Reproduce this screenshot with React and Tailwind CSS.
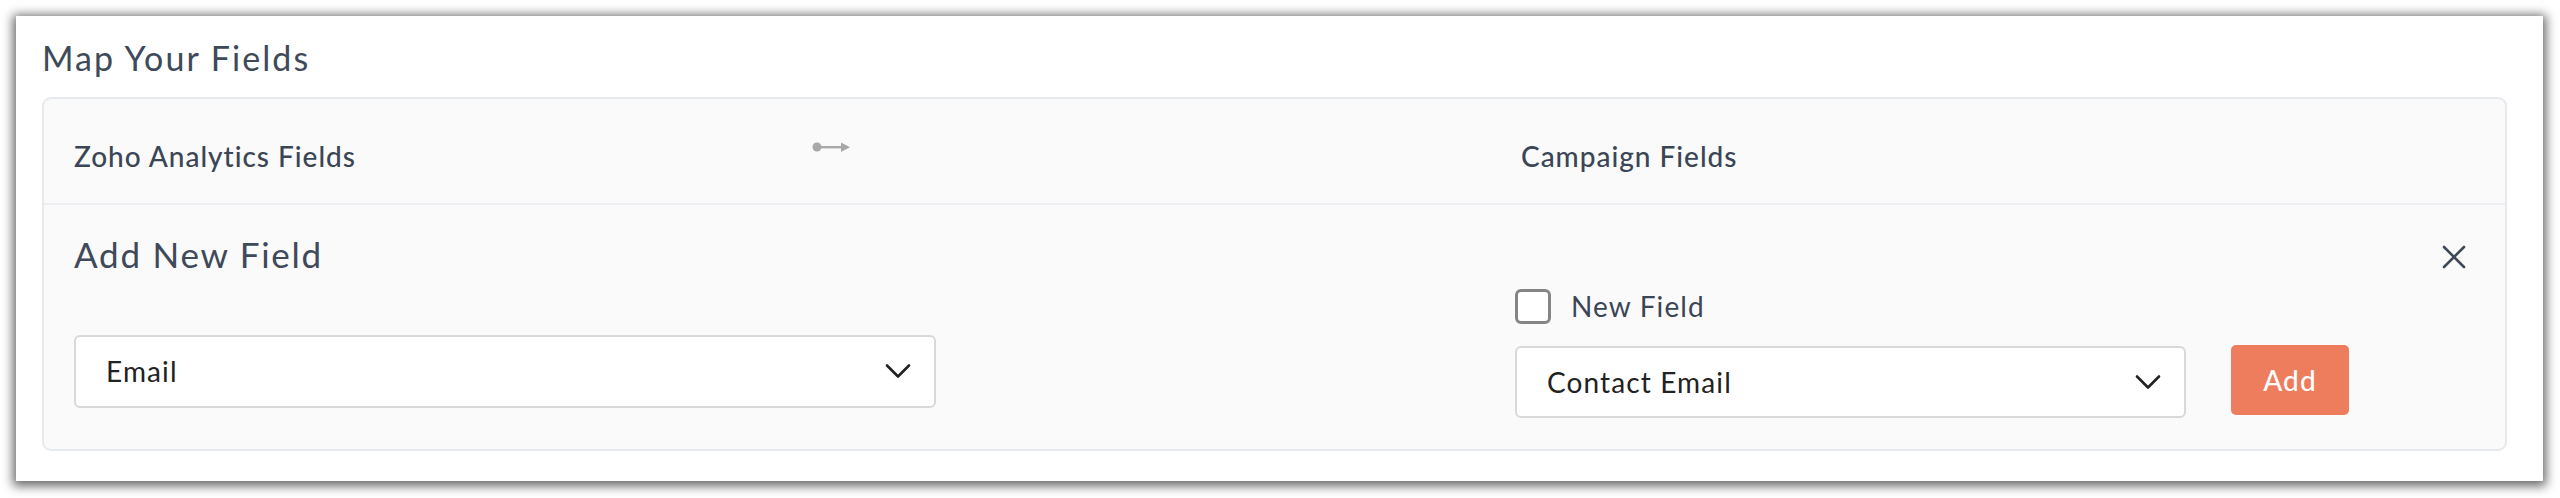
import React from 'react'

const font = { fontFamily: 'Lato, "Open Sans", sans-serif' }

function Chevron() {
  return (
    <svg width="26" height="16" viewBox="0 0 26 16" fill="none" className="shrink-0">
      <path d="M2 2.5 L13 13.5 L24 2.5" stroke="#222" strokeWidth="2.6" strokeLinecap="round" strokeLinejoin="round" />
    </svg>
  )
}

function Select({ value, className }) {
  return (
    <div className={`flex items-center justify-between bg-white border-2 border-[#d8d8d8] rounded-[6px] pl-[30px] pr-[23px] ${className}`}>
      <span className="text-[28px] leading-none text-[#222] tracking-[0.04em]">{value}</span>
      <Chevron />
    </div>
  )
}

function MapArrow() {
  return (
    <svg width="40" height="12" viewBox="0 0 40 12" fill="#a8a8a8">
      <circle cx="5" cy="6" r="4.5" />
      <rect x="5" y="5" width="26" height="2.4" />
      <path d="M29 1.5 L38 6.2 L29 10.9 Z" />
    </svg>
  )
}

export default function App() {
  return (
    <div className="w-[2560px] h-[498px] bg-white pt-[16px] pl-[16px] pr-[17px] pb-[17px]" style={font}>
      <div className="h-full bg-white shadow-[0_2px_10px_3px_rgba(0,0,0,0.6)] pl-[26px] pr-[36px] pt-[22px]">
        <h2 className="text-[34px] leading-[1.2] text-[#3e4959] tracking-[0.06em] mb-[18px]">Map Your Fields</h2>

        <div className="bg-[#fafafa] border-2 border-[#e6e9ee] rounded-[9px]">
          {/* header row */}
          <div className="flex items-center h-[106px] pl-[30px] pt-[10px] border-b-2 border-[#eceef2]">
            <div className="w-[738px] text-[28px] font-medium text-[#3a4555] tracking-[0.035em]">Zoho Analytics Fields</div>
            <div className="-mt-[18px]"><MapArrow /></div>
            <div className="ml-[669px] text-[28px] font-medium text-[#3a4555] tracking-[0.035em]">Campaign Fields</div>
          </div>

          {/* add new field row */}
          <div className="flex items-start pl-[30px] pr-[39px] pt-[28px] pb-[31px]">
            <div className="w-[862px] flex flex-col">
              <div className="text-[35px] leading-[1.2] text-[#3e4959] tracking-[0.05em]">Add New Field</div>
              <Select value="Email" className="mt-[60px] h-[73px]" />
            </div>

            <div className="ml-[579px] mt-[56px] flex flex-col">
              <label className="flex items-center gap-[20px] h-[35px]">
                <span className="w-[36px] h-[35px] rounded-[6px] border-[3.5px] border-[#858585] bg-white" />
                <span className="text-[28px] text-[#3b4556] tracking-[0.04em]">New Field</span>
              </label>
              <div className="flex items-center gap-[45px] mt-[22px]">
                <Select value="Contact Email" className="w-[671px] h-[72px]" />
                <button className="w-[118px] h-[70px] -mt-[3px] rounded-[5px] bg-[#ee7d5e] text-white text-[28px] font-medium tracking-[0.04em]">Add</button>
              </div>
            </div>

            <button className="ml-auto mt-[12px] w-[24px] h-[24px]">
              <svg width="24" height="24" viewBox="0 0 24 24" fill="none">
                <path d="M2 2 L22 22 M22 2 L2 22" stroke="#3e4959" strokeWidth="2.6" strokeLinecap="round" />
              </svg>
            </button>
          </div>
        </div>
      </div>
    </div>
  )
}
